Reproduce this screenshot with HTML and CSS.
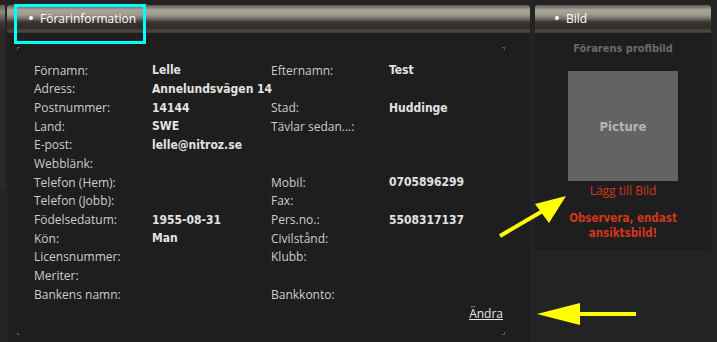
FILE: index.html
```html
<!DOCTYPE html>
<html lang="sv">
<head>
    <meta charset="UTF-8">
    <title>Förarinformation</title>
    <link rel="stylesheet" href="styles.css">
</head>
<body>
    <div class="page">
        <div class="stub">
            <div class="stub-head"></div>
            <div class="stub-body"></div>
        </div>

        <div class="panel panel-info">
            <div class="panel-head"><span class="dot"></span>Förarinformation</div>
            <div class="panel-body">
                <div class="info-box">
                    <div class="info-grid">
                        <span class="lbl">Förnamn:</span><span class="val">Lelle</span>
                        <span class="lbl">Efternamn:</span><span class="val">Test</span>

                        <span class="lbl">Adress:</span><span class="val">Annelundsvägen 14</span>
                        <span></span><span></span>

                        <span class="lbl">Postnummer:</span><span class="val">14144</span>
                        <span class="lbl">Stad:</span><span class="val">Huddinge</span>

                        <span class="lbl">Land:</span><span class="val">SWE</span>
                        <span class="lbl">Tävlar sedan...:</span><span></span>

                        <span class="lbl">E-post:</span><span class="val">lelle@nitroz.se</span>
                        <span></span><span></span>

                        <span class="lbl">Webblänk:</span><span></span>
                        <span></span><span></span>

                        <span class="lbl">Telefon (Hem):</span><span></span>
                        <span class="lbl">Mobil:</span><span class="val">0705896299</span>

                        <span class="lbl">Telefon (Jobb):</span><span></span>
                        <span class="lbl">Fax:</span><span></span>

                        <span class="lbl">Födelsedatum:</span><span class="val">1955-08-31</span>
                        <span class="lbl">Pers.no.:</span><span class="val">5508317137</span>

                        <span class="lbl">Kön:</span><span class="val">Man</span>
                        <span class="lbl">Civilstånd:</span><span></span>

                        <span class="lbl">Licensnummer:</span><span></span>
                        <span class="lbl">Klubb:</span><span></span>

                        <span class="lbl">Meriter:</span><span></span>
                        <span></span><span></span>

                        <span class="lbl">Bankens namn:</span><span></span>
                        <span class="lbl">Bankkonto:</span><span></span>
                    </div>
                    <div class="edit-row"><a href="#" class="edit-link">Ändra</a></div>
                </div>
            </div>
        </div>

        <div class="panel panel-pic">
            <div class="panel-head"><span class="dot"></span>Bild</div>
            <div class="panel-body pic-body">
                <div class="pic-title">Förarens profibild</div>
                <div class="picture">Picture</div>
                <a href="#" class="add-pic">Lägg till Bild</a>
                <div class="notice">Observera, endast<br>ansiktsbild!</div>
            </div>
        </div>
    </div>

    <!-- annotations drawn over the screenshot -->
    <div class="mark-box"></div>
    <svg class="arrows" width="717" height="342" viewBox="0 0 717 342">
        <line x1="500" y1="236" x2="546" y2="209" stroke="#ffff00" stroke-width="4"/>
        <polygon points="566,196 535,204 549,223" fill="#ffff00"/>
        <line x1="636" y1="314" x2="575" y2="314" stroke="#ffff00" stroke-width="4"/>
        <polygon points="537,314 580,303 580,325" fill="#ffff00"/>
    </svg>
</body>
</html>
```

FILE: styles.css
```css
* {
    box-sizing: border-box;
}

body {
    margin: 0;
    background-color: #232323;
    font-family: "Open Sans", "Liberation Sans", sans-serif;
    font-size: 12px;
    color: #cfcfcf;
    width: 717px;
    height: 342px;
    overflow: hidden;
    position: relative;
}

.page {
    display: flex;
    align-items: flex-start;
    padding-top: 5px;
}

/* sliver of the panel to the left */
.stub {
    width: 5px;
    margin-right: 2px;
}

.stub-head {
    height: 28px;
    background: linear-gradient(#5e5a53, #8f8a80 25%, #3b3731 65%, #2c2a26);
}

.stub-body {
    height: 157px;
    background-color: #292929;
}

.panel-head {
    height: 28px;
    display: flex;
    align-items: center;
    color: #fff;
    font-size: 12px;
    border-radius: 3px 3px 0 0;
    background: linear-gradient(#5d5951 0%, #aaa59b 18%, #a09b91 35%, #6f6a62 50%, #3a3731 60%, #2f2c28 82%, #4b4841 92%, #3a3733 100%);
    padding-bottom: 2px;
}

.dot {
    width: 4px;
    height: 4px;
    border-radius: 50%;
    background-color: #fff;
    margin-right: 7px;
}

.panel-info {
    width: 523px;
    margin-right: 5px;
}

.panel-info .panel-head {
    padding-left: 22px;
}

.panel-body {
    background-color: #1e1e1e;
}

.panel-info .panel-body {
    height: 320px;
    padding: 14px 25px 0 10px;
}

.info-box {
    height: 288px;
    padding: 14px 0 0 17px;
    background:
        linear-gradient(#5a5a5a, #5a5a5a) left top / 3px 1px no-repeat,
        linear-gradient(#5a5a5a, #5a5a5a) left top / 1px 3px no-repeat,
        linear-gradient(#5a5a5a, #5a5a5a) right top / 3px 1px no-repeat,
        linear-gradient(#5a5a5a, #5a5a5a) right top / 1px 3px no-repeat,
        linear-gradient(#5a5a5a, #5a5a5a) left bottom / 3px 1px no-repeat,
        linear-gradient(#5a5a5a, #5a5a5a) left bottom / 1px 3px no-repeat,
        linear-gradient(#5a5a5a, #5a5a5a) right bottom / 3px 1px no-repeat,
        linear-gradient(#5a5a5a, #5a5a5a) right bottom / 1px 3px no-repeat;
}

.info-grid {
    display: grid;
    grid-template-columns: 118px 119px 118px 1fr;
    grid-auto-rows: 18.67px;
    align-items: center;
}

.lbl {
    color: #cdcdcd;
    white-space: nowrap;
}

.val {
    font-family: "DejaVu Sans Condensed", "DejaVu Sans", sans-serif;
    font-stretch: condensed;
    font-weight: bold;
    font-size: 12px;
    color: #e2e2e2;
    white-space: nowrap;
}

.edit-row {
    display: flex;
    justify-content: flex-end;
    margin-top: 1px;
    padding-right: 2px;
}

.edit-link {
    color: #e6e6e6;
    text-decoration: underline;
}

.panel-pic {
    width: 176px;
}

.panel-pic .panel-head {
    padding-left: 20px;
}

.pic-body {
    height: 217px;
    display: flex;
    flex-direction: column;
    align-items: center;
    padding-top: 9px;
}

.pic-title {
    font-family: "DejaVu Sans Condensed", "DejaVu Sans", sans-serif;
    font-stretch: condensed;
    font-weight: bold;
    font-size: 11px;
    color: #6b6b6b;
}

.picture {
    width: 110px;
    height: 110px;
    margin-top: 16px;
    background-color: #636363;
    display: flex;
    align-items: center;
    justify-content: center;
    font-family: "DejaVu Sans Condensed", "DejaVu Sans", sans-serif;
    font-stretch: condensed;
    font-weight: bold;
    font-size: 13px;
    color: #b5b5b5;
}

.add-pic {
    margin-top: 1px;
    color: #d2361c;
    text-decoration: none;
    font-size: 12px;
}

.notice {
    margin-top: 12px;
    text-align: center;
    font-family: "DejaVu Sans Condensed", "DejaVu Sans", sans-serif;
    font-stretch: condensed;
    font-weight: bold;
    font-size: 11.5px;
    line-height: 15px;
    color: #d2361c;
}

.mark-box {
    position: absolute;
    left: 14px;
    top: 4px;
    width: 132px;
    height: 40px;
    border: 3px solid #00ffff;
}

.arrows {
    position: absolute;
    left: 0;
    top: 0;
}
```
